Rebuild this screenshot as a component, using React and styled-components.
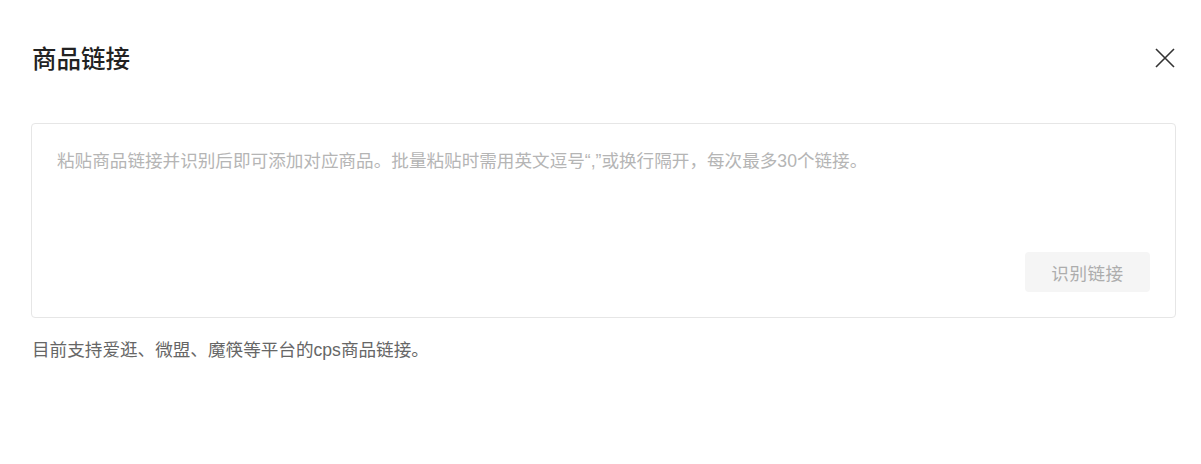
import React from 'react'
import styled, { createGlobalStyle } from 'styled-components'

const GlobalStyle = createGlobalStyle`
    html, body {
        margin: 0;
        padding: 0;
        background: #fff;
        font-family: "Liberation Sans", "Noto Sans CJK SC", sans-serif;
    }
`

const Page = styled.div`
    padding: 40px 25px 0 31px;
    height: 464px;
    box-sizing: border-box;
`
const Header = styled.div`
    display: flex;
    align-items: center;
    justify-content: space-between;
    height: 44px;
`
const Title = styled.h2`
    margin: -5px 0 0 1px;
    font-size: 24.5px;
    font-weight: 500;
    color: #222;
    line-height: 44px;
`
const CloseButton = styled.button`
    display: flex;
    align-items: center;
    justify-content: center;
    width: 24px;
    height: 24px;
    padding: 0;
    margin-right: -1px;
    margin-top: -9px;
    border: none;
    background: none;
    cursor: pointer;
`
const LinkBox = styled.div`
    display: flex;
    flex-direction: column;
    margin-top: 39px;
    height: 195px;
    box-sizing: border-box;
    padding: 24px 25px 25px 25px;
    border: 1px solid #e6e6e6;
    border-radius: 4px;
`
const LinkInput = styled.textarea`
    flex: 1;
    border: none;
    outline: none;
    resize: none;
    padding: 0;
    font-family: inherit;
    font-size: 17.6px;
    line-height: 26px;
    color: #333;
    &::placeholder {
        color: #b5b5b5;
    }
`
const Actions = styled.div`
    display: flex;
    justify-content: flex-end;
`
const RecognizeButton = styled.button`
    width: 125px;
    height: 40px;
    border: none;
    border-radius: 4px;
    background: #f5f5f5;
    color: #adadad;
    font-family: inherit;
    font-size: 17.6px;
    letter-spacing: 0.5px;
    cursor: not-allowed;
`
const Hint = styled.p`
    margin: 20px 0 0 1px;
    font-size: 17.6px;
    line-height: 24px;
    color: #666;
`

function CloseIcon() {
    return (
        <svg width="20" height="20" viewBox="0 0 20 20">
            <path d="M1 1 L19 19 M19 1 L1 19" stroke="#333" strokeWidth="1.6" fill="none" />
        </svg>
    )
}

export default function App() {
    return (
        <Page>
            <GlobalStyle />
            <Header>
                <Title>商品链接</Title>
                <CloseButton aria-label="关闭">
                    <CloseIcon />
                </CloseButton>
            </Header>
            <LinkBox>
                <LinkInput placeholder="粘贴商品链接并识别后即可添加对应商品。批量粘贴时需用英文逗号“,”或换行隔开，每次最多30个链接。" />
                <Actions>
                    <RecognizeButton disabled>识别链接</RecognizeButton>
                </Actions>
            </LinkBox>
            <Hint>目前支持爱逛、微盟、魔筷等平台的cps商品链接。</Hint>
        </Page>
    )
}
